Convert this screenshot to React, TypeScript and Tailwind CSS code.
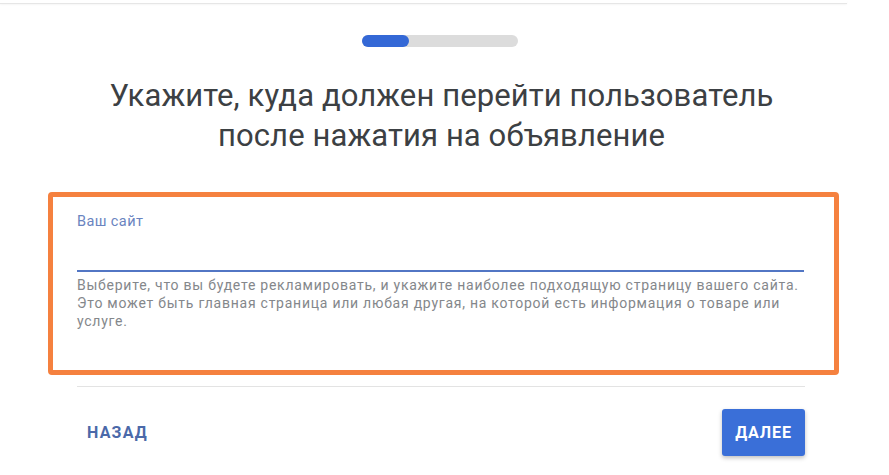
import React from "react";

export default function App() {
  return (
    <div className="relative w-[889px] h-[475px] overflow-hidden bg-white font-['Roboto',sans-serif]">
      <div className="h-[4px] w-[847px] border-b border-[#e6e6e6] shadow-[0_1px_2px_rgba(0,0,0,0.04)]" />

      <div className="ml-[362px] mt-[31px] h-[12px] w-[156px] rounded-full bg-[#dcdcdc]">
        <div className="h-full w-[47px] rounded-full bg-[#3468d6]" />
      </div>

      <h1 className="mr-[6px] mt-[29px] text-center text-[31px] leading-[40px] tracking-[0.1px] font-normal text-[#3c4043]">
        Укажите, куда должен перейти пользователь
        <br />
        после нажатия на объявление
      </h1>

      <div className="ml-[48px] mt-[36px] h-[183px] w-[791px] rounded-[4px] border-[5px] border-[#f5813f] pl-[24px] pr-[30px] pt-[15px]">
        <div className="text-[14.5px] leading-[20px] tracking-[0.4px] text-[#6a84c0]">Ваш сайт</div>
        <div className="h-[40px] border-b-2 border-[#5276c4]" />
        <p className="pt-[4px] text-[14px] leading-[18px] tracking-[0.75px] text-[#84878b] whitespace-nowrap">
          Выберите, что вы будете рекламировать, и укажите наиболее подходящую страницу вашего сайта.
          <br />
          Это может быть главная страница или любая другая, на которой есть информация о товаре или
          <br />
          услуге.
        </p>
      </div>

      <div className="mx-[77px] mt-[11px] w-[728px] border-t border-[#e3e3e3]">
        <div className="flex items-center justify-between pt-[22px]">
          <button className="ml-[10px] text-[16px] font-bold tracking-[1.2px] text-[#4b69a9]">НАЗАД</button>
          <button className="h-[47px] w-[83px] rounded-[3px] bg-[#3a6fd8] text-[16px] font-bold tracking-[0.9px] text-white shadow-[0_2px_4px_rgba(0,0,0,0.25)]">
            ДАЛЕЕ
          </button>
        </div>
      </div>
    </div>
  );
}
